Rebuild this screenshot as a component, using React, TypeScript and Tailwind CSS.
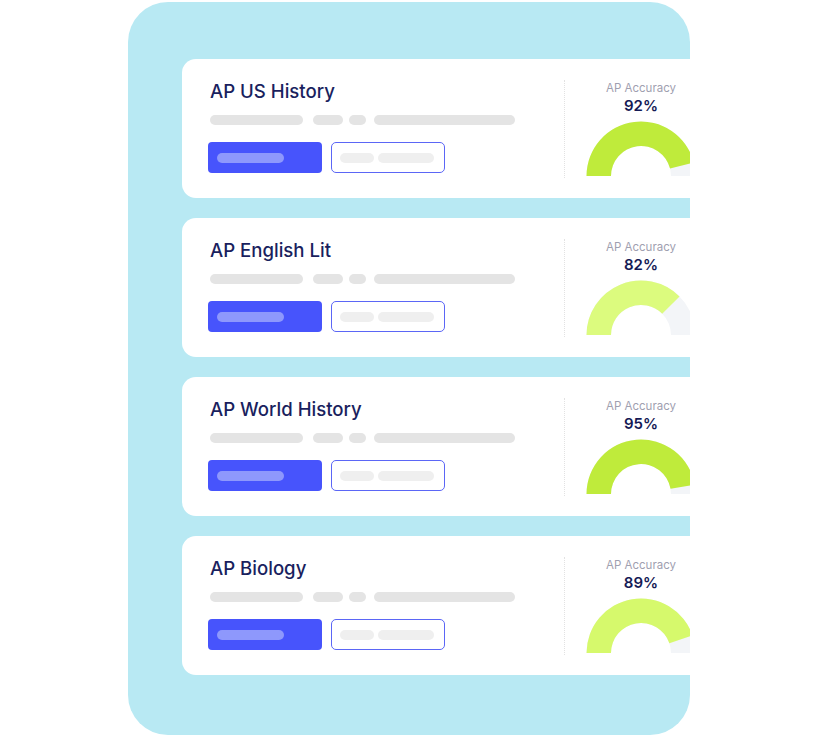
import React from "react";

interface Course {
  title: string;
  percent: string;
  fill: number;
  color: string;
}

const courses: Course[] = [
  { title: "AP US History", percent: "92%", fill: 0.92, color: "#bfeb3b" },
  { title: "AP English Lit", percent: "82%", fill: 0.75, color: "#dcfb7e" },
  { title: "AP World History", percent: "95%", fill: 0.945, color: "#bfeb3b" },
  { title: "AP Biology", percent: "89%", fill: 0.895, color: "#d6f96c" },
];

const arcPath = (from: number, to: number, r1: number, r2: number) => {
  const cx = 55;
  const cy = 55;
  const pt = (r: number, deg: number) => {
    const a = (deg * Math.PI) / 180;
    return `${(cx + r * Math.cos(a)).toFixed(2)} ${(cy - r * Math.sin(a)).toFixed(2)}`;
  };
  return [
    `M ${pt(r2, from)}`,
    `A ${r2} ${r2} 0 0 1 ${pt(r2, to)}`,
    `L ${pt(r1, to)}`,
    `A ${r1} ${r1} 0 0 0 ${pt(r1, from)}`,
    "Z",
  ].join(" ");
};

const Gauge: React.FC<{ fill: number; color: string }> = ({ fill, color }) => (
  <svg width="110" height="55" viewBox="0 0 110 55" className="block overflow-visible">
    <path d={arcPath(180, 0, 30, 54.5)} fill="#f3f5f8" />
    <path d={arcPath(180, 180 - 180 * fill, 30, 54.5)} fill={color} />
  </svg>
);

const CourseCard: React.FC<{ course: Course }> = ({ course }) => (
  <div className="flex items-start w-[560px] h-[139px] shrink-0 bg-white rounded-l-[14px] pl-[26px]">
    <div className="flex flex-col w-[356px] pt-[20px]">
      <h2 className="ml-[2px] text-[18.6px] leading-[24px] font-medium text-[#1a1f5e]">
        {course.title}
      </h2>
      <div className="flex items-center ml-[2px] mt-[12px]">
        <div className="h-[10px] w-[93px] rounded-full bg-[#e4e4e4]" />
        <div className="h-[10px] w-[30px] ml-[10px] rounded-full bg-[#e4e4e4]" />
        <div className="h-[10px] w-[17px] ml-[6px] rounded-full bg-[#e4e4e4]" />
        <div className="h-[10px] w-[141px] ml-[8px] rounded-full bg-[#e4e4e4]" />
      </div>
      <div className="flex items-center mt-[17px] gap-[9px]">
        <div className="flex items-center h-[31px] w-[114px] rounded-[4px] bg-[#4754fc] pl-[9px]">
          <div className="h-[10px] w-[67px] rounded-full bg-[#8e98fc]" />
        </div>
        <div className="flex items-center h-[31px] w-[114px] rounded-[5px] border border-[#5b66f6] pl-[8px] gap-[4px]">
          <div className="h-[10px] w-[34px] rounded-full bg-[#efefef]" />
          <div className="h-[10px] w-[56px] rounded-full bg-[#efefef]" />
        </div>
      </div>
    </div>
    <div className="mt-[21px] h-[98px] border-l border-dotted border-[#e2e2e2]" />
    <div className="flex flex-col items-center w-[110px] ml-[21px] pt-[22px]">
      <div className="text-[11.5px] leading-[14px] text-[#9fa0b0]">AP Accuracy</div>
      <div className="mt-[2px] text-[15px] leading-[18px] font-semibold text-[#151a55]">
        {course.percent}
      </div>
      <div className="mt-[6px]">
        <Gauge fill={course.fill} color={course.color} />
      </div>
    </div>
  </div>
);

const App: React.FC = () => (
  <div
    className="w-[819px] h-[735px] bg-white overflow-hidden"
    style={{ fontFamily: "Inter, 'Noto Sans', sans-serif" }}
  >
    <div className="ml-[128px] mt-[2px] w-[562px] h-[733px] rounded-[40px] bg-[#b8e9f3] overflow-hidden pt-[57px] pl-[54px]">
      <div className="flex flex-col gap-[20px]">
        {courses.map((c) => (
          <CourseCard key={c.title} course={c} />
        ))}
      </div>
    </div>
  </div>
);

export default App;
